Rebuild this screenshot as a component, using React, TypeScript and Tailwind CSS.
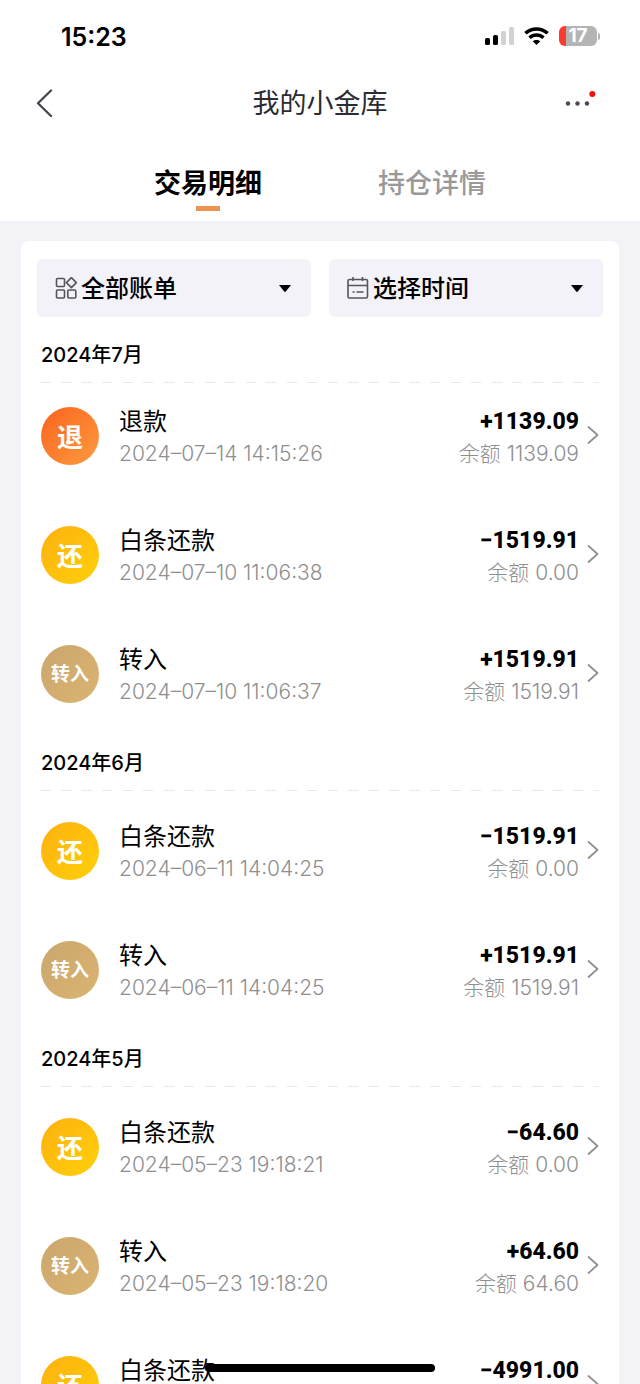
import { clsx } from 'clsx'

type Kind = 'refund' | 'repay' | 'deposit'

interface Transaction {
  kind: Kind
  title: string
  time: string
  amount: string
  balance: string
}

interface MonthGroup {
  month: string
  items: Transaction[]
}

const groups: MonthGroup[] = [
  {
    month: '2024年7月',
    items: [
      { kind: 'refund', title: '退款', time: '2024–07–14 14:15:26', amount: '+1139.09', balance: '1139.09' },
      { kind: 'repay', title: '白条还款', time: '2024–07–10 11:06:38', amount: '−1519.91', balance: '0.00' },
      { kind: 'deposit', title: '转入', time: '2024–07–10 11:06:37', amount: '+1519.91', balance: '1519.91' },
    ],
  },
  {
    month: '2024年6月',
    items: [
      { kind: 'repay', title: '白条还款', time: '2024–06–11 14:04:25', amount: '−1519.91', balance: '0.00' },
      { kind: 'deposit', title: '转入', time: '2024–06–11 14:04:25', amount: '+1519.91', balance: '1519.91' },
    ],
  },
  {
    month: '2024年5月',
    items: [
      { kind: 'repay', title: '白条还款', time: '2024–05–23 19:18:21', amount: '−64.60', balance: '0.00' },
      { kind: 'deposit', title: '转入', time: '2024–05–23 19:18:20', amount: '+64.60', balance: '64.60' },
      { kind: 'repay', title: '白条还款', time: '2024–05–22 10:21:07', amount: '−4991.00', balance: '0.00' },
    ],
  },
]

const badges: Record<Kind, { label: string; className: string }> = {
  refund: { label: '退', className: 'bg-linear-to-br from-[#f9621c] to-[#fd9a3e] text-[26px]' },
  repay: { label: '还', className: 'bg-linear-to-br from-[#fdb00f] to-[#ffd00a] text-[26px]' },
  deposit: { label: '转入', className: 'bg-linear-to-br from-[#cba66c] to-[#dab471] text-[19px]' },
}

function StatusBar() {
  return (
    <div className="flex h-[72px] items-center justify-between pl-[61px] pr-10">
      <span className="pt-px text-[25px] leading-7 font-semibold">15:23</span>
      <div className="flex items-center gap-2.5">
        {/* Signal */}
        <svg className="h-[18px] w-[29px]" viewBox="0 0 29 18">
          <rect x="0" y="11" width="5" height="7" rx="1.6" />
          <rect x="8" y="8" width="5" height="10" rx="1.6" />
          <rect x="16" y="4" width="5" height="14" rx="1.6" fill="#d2d2d2" />
          <rect x="24" y="0" width="5" height="18" rx="1.6" fill="#d2d2d2" />
        </svg>
        {/* Wifi */}
        <svg className="h-[18px] w-[25px]" viewBox="0 0 25 18">
          <path d="M1.400 6.300C7.600.500 17.400.500 23.600 6.300" fill="none" stroke="#000" strokeWidth="3.500" />
          <path d="M5.500 10.800c4-3.800 10-3.800 14 0" fill="none" stroke="#000" strokeWidth="3.400" />
          <path d="M12.500 18 8.700 14.300c2.200-1.900 5.400-1.900 7.600 0z" />
        </svg>
        {/* Battery */}
        <div className="flex items-center gap-px">
          <div className="flex h-5 w-[38px] items-center justify-center rounded-md bg-linear-to-r from-[#fb3b30] from-18% to-[#b4b4b4] to-18% text-[19px] leading-5 font-bold text-white">
            17
          </div>
          <div className="h-[7px] w-0.5 rounded-r-full bg-[#b4b4b4]" />
        </div>
      </div>
    </div>
  )
}

function NavBar() {
  return (
    <div className="flex h-[62px] items-center justify-between px-9 text-[#2b2b33]">
      <button type="button" aria-label="返回" className="flex h-10 w-10 items-center">
        <svg className="h-7 w-[17px]" viewBox="0 0 17 28" fill="none" stroke="#45454f" strokeWidth="2.3" strokeLinecap="round" strokeLinejoin="round">
          <path d="M15 1.500 2 14.300 15 27" />
        </svg>
      </button>
      <h1 className="pt-0.5 text-[27px] leading-9 font-normal">我的小金库</h1>
      <button type="button" aria-label="更多" className="flex h-10 w-10 items-center justify-end">
        <svg className="h-7 w-10" viewBox="0 0 40 28">
          <circle cx="4" cy="14.500" r="2.200" fill="#4a4a50" />
          <circle cx="13.500" cy="14.500" r="2.200" fill="#4a4a50" />
          <circle cx="23" cy="14.500" r="2.200" fill="#4a4a50" />
          <circle cx="28.300" cy="5" r="3" fill="#f80d10" />
        </svg>
      </button>
    </div>
  )
}

function Tabs() {
  return (
    <div role="tablist" className="grid h-[87px] grid-cols-2 px-24">
      <button type="button" role="tab" aria-selected="true" className="flex flex-col items-center pt-[31px] text-[27px] leading-[38px] font-bold">
        交易明细
        <span className="mt-[3px] h-[5px] w-6 bg-[#ea9550]" />
      </button>
      <button type="button" role="tab" aria-selected="false" className="flex flex-col items-center pt-[31px] text-[27px] leading-[38px] font-medium text-[#999]">
        持仓详情
      </button>
    </div>
  )
}

function Caret() {
  return (
    <svg className="pointer-events-none h-[7px] w-3 shrink-0" viewBox="0 0 12 7">
      <path d="M0 0h12L6.800 6.500q-.8.800-1.600 0z" />
    </svg>
  )
}

function Filters() {
  return (
    <div className="mb-[15px] grid grid-cols-2 gap-[18px] px-4 text-2xl font-medium">
      <label className="flex h-[58px] items-center rounded-md bg-[#f3f2f8] pl-[18px] pr-5">
        <svg className="mr-1 h-[22px] w-[22px] shrink-0" viewBox="0 0 22 22" fill="none" stroke="#55555c" strokeWidth="1.6">
          <rect x="1.500" y="1.500" width="8" height="8" rx="1" />
          <rect x="1.500" y="13" width="8" height="8" rx="1" />
          <rect x="12.800" y="13" width="8" height="8" rx="1" />
          <path d="M16.400.6 21.400 5.600 16.400 10.600 11.400 5.600z" strokeLinejoin="round" />
        </svg>
        <select aria-label="账单类型" className="h-10 min-w-0 flex-1 appearance-none bg-transparent pt-0.5 outline-none">
          <option>全部账单</option>
        </select>
        <Caret />
      </label>
      <label className="flex h-[58px] items-center rounded-md bg-[#f3f2f8] pl-[18px] pr-5">
        <svg className="mr-1 h-[22px] w-[22px] shrink-0" viewBox="0 0 22 22" fill="none" stroke="#55555c" strokeWidth="1.6">
          <rect x="1" y="2.500" width="19.500" height="18.500" rx="1.500" />
          <path d="M1 8.500h19.500M6 0v4M15.500 0v4M5.500 15h2.200M9.500 15h7" />
        </svg>
        <select aria-label="时间" className="h-10 min-w-0 flex-1 appearance-none bg-transparent pt-0.5 outline-none">
          <option>选择时间</option>
        </select>
        <Caret />
      </label>
    </div>
  )
}

function TransactionRow({ item }: { item: Transaction }) {
  const badge = badges[item.kind]
  return (
    <a href="#detail" className="flex h-[119px] items-start pt-6">
      <span className={clsx('flex h-[58px] w-[58px] shrink-0 items-center justify-center rounded-full pt-0.5 font-bold text-white', badge.className)}>
        {badge.label}
      </span>
      <div className="ml-5 min-w-0 flex-1 pt-px">
        <div className="text-2xl leading-7">{item.title}</div>
        <div className="mt-1 text-[21px] leading-7 font-light text-[#8f8f8f]">{item.time}</div>
      </div>
      <div className="pt-px text-right">
        <div className="font-[Roboto,sans-serif] text-[23px] leading-7 font-extrabold">{item.amount}</div>
        <div className="mt-1 text-[21px] leading-7 font-light text-[#8f8f8f]">余额 {item.balance}</div>
      </div>
      <svg className="mt-[19px] ml-2 h-[18px] w-3" viewBox="0 0 12 18" fill="none" stroke="#8f8f8f" strokeWidth="1.700" strokeLinecap="round" strokeLinejoin="round">
        <path d="M1.500 1 10.500 9 1.500 17" />
      </svg>
    </a>
  )
}

export default function App() {
  return (
    <div className="relative flex h-screen flex-col overflow-hidden bg-[#f2f2f7] font-[Inter,'Noto_Sans_CJK_SC',sans-serif] text-black">
      <header className="shrink-0 bg-white">
        <StatusBar />
        <NavBar />
        <Tabs />
      </header>

      <main className="min-h-0 flex-1 overflow-y-auto px-[21px] pt-5 [scrollbar-width:none]">
        <div className="rounded-lg bg-white pt-[18px]">
          <Filters />
          {groups.map((group, groupIndex) => (
            <section key={group.month} className="px-5">
              <h2 className="pt-[9px] pb-[13px] text-xl leading-7 font-medium">{group.month}</h2>
              <div className="h-px bg-[repeating-linear-gradient(90deg,#e8e8e8_0,#e8e8e8_1.8%,transparent_1.8%,transparent_3.67%)]" />
              <ul className={clsx(groupIndex > 0 && 'pt-[7px]')}>
                {group.items.map((item) => (
                  <li key={item.time}>
                    <TransactionRow item={item} />
                  </li>
                ))}
              </ul>
            </section>
          ))}
        </div>
      </main>

      {/* Home indicator */}
      <div className="absolute bottom-3 left-1/2 h-2 w-[230px] -translate-x-1/2 rounded-full bg-black" />
    </div>
  )
}
